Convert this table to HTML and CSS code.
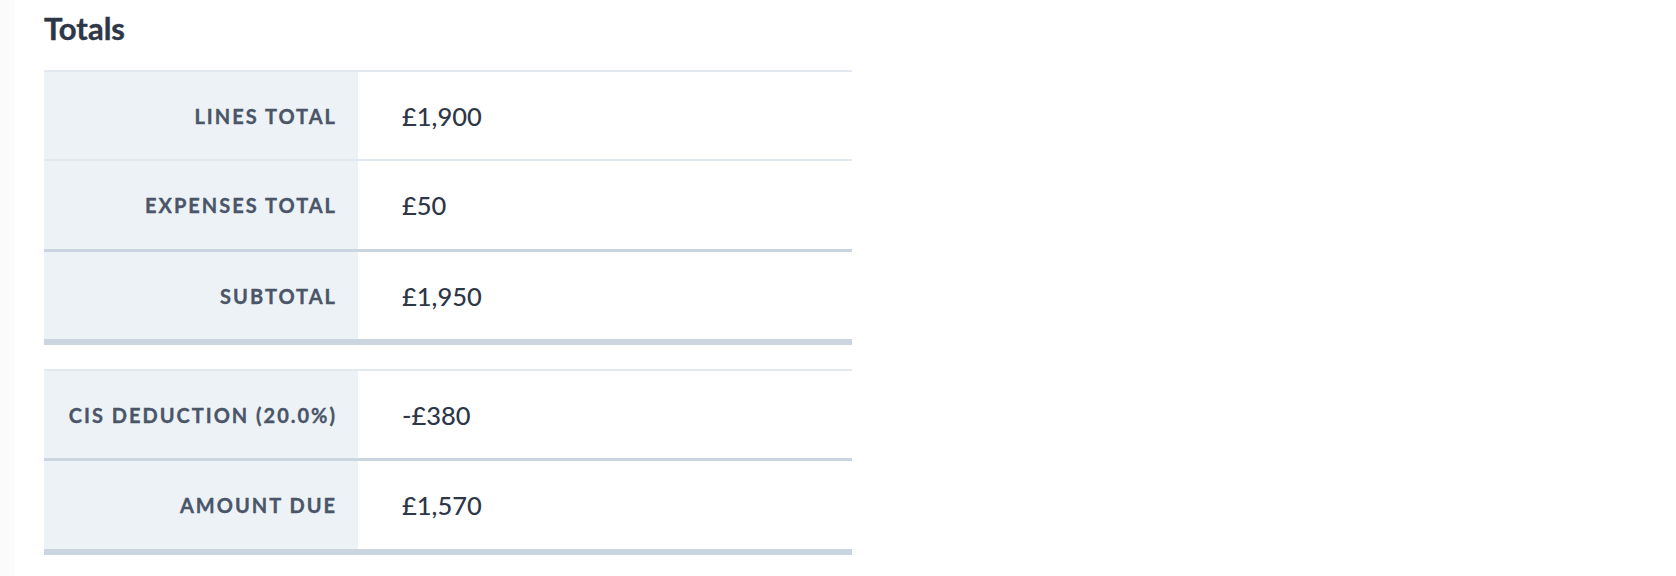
FILE: index.html
```html
<!DOCTYPE html>
<html lang="en">
<head>
    <meta charset="UTF-8">
    <meta name="viewport" content="width=device-width, initial-scale=1.0">
    <title>Totals</title>
    <link rel="stylesheet" href="styles.css">
</head>
<body>
    <div class="page">
        <h2>Totals</h2>

        <div class="totals">
            <div class="row">
                <div class="label">Lines total</div>
                <div class="value">£1,900</div>
            </div>
            <div class="row">
                <div class="label">Expenses total</div>
                <div class="value">£50</div>
            </div>
            <div class="row total">
                <div class="label">Subtotal</div>
                <div class="value">£1,950</div>
            </div>
        </div>

        <div class="totals">
            <div class="row">
                <div class="label">CIS deduction (20.0%)</div>
                <div class="value">-£380</div>
            </div>
            <div class="row total">
                <div class="label">Amount due</div>
                <div class="value">£1,570</div>
            </div>
        </div>
    </div>
</body>
</html>
```

FILE: styles.css
```css
body {
    font-family: Lato, "Open Sans", sans-serif;
    margin: 0;
    color: #2d3748;
    background: linear-gradient(to right, #fbfbfb 15px, #fff 15px);
}
.page {
    padding: 12px 0 0 44px;
}
h2 {
    margin: 0 0 25px;
    font-size: 31px;
    line-height: 33px;
    font-weight: 700;
    color: #2d3748;
    -webkit-text-stroke: 0.4px #2d3748;
}
.totals {
    width: 808px;
    margin-bottom: 24px;
    border-bottom: 6px solid #cbd5e0;
}
.row {
    display: grid;
    grid-template-columns: 314px 1fr;
    border-top: 2px solid #e2e8f0;
}
.row.total {
    border-top: 3px solid #cbd5e0;
}
.label,
.value {
    height: 87px;
    display: flex;
    align-items: center;
}
.row:nth-child(2) .label,
.row:nth-child(2) .value {
    height: 88px;
}
.label {
    justify-content: flex-end;
    padding-right: 21px;
    background-color: #edf2f7;
    color: #4a5568;
    font-size: 20px;
    font-weight: 700;
    letter-spacing: 0.1em;
    text-transform: uppercase;
    -webkit-text-stroke: 0.35px #4a5568;
}
.value {
    padding-left: 44px;
    font-size: 25.5px;
    font-weight: 500;
}
```
